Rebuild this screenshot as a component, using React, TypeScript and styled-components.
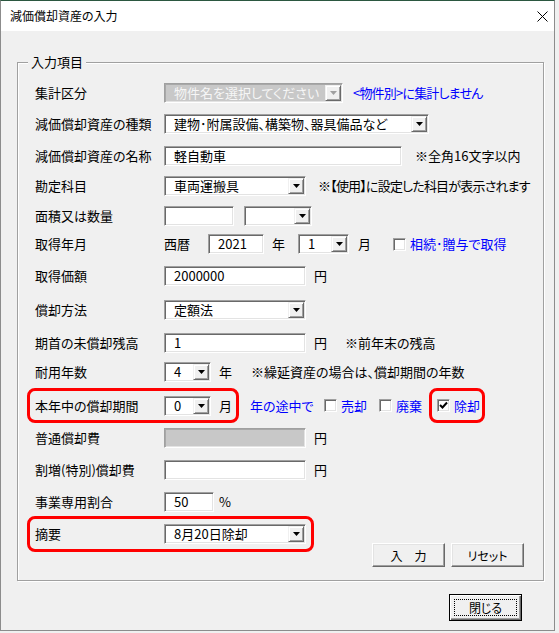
import type { ReactNode } from 'react';
import styled, { createGlobalStyle } from 'styled-components';

const GlobalStyle = createGlobalStyle`
  html, body {
    margin: 0;
    padding: 0;
    background: #f0f0f0;
  }
  body {
    font-family: 'Noto Sans CJK JP', 'Noto Sans', sans-serif;
    font-size: 13px;
    font-feature-settings: 'palt';
    color: #000;
    line-height: 16px;
  }
  * {
    box-sizing: border-box;
  }
`;

const Window = styled.div`
  width: 555px;
  height: 631px;
  border: 1px solid #8c8c8c;
  border-top-color: #2b5740;
  background: #f0f0f0;
  display: flex;
  flex-direction: column;
`;

const TitleBar = styled.div`
  height: 30px;
  flex: none;
  background: #fff;
  display: flex;
  align-items: center;
  justify-content: space-between;
  padding: 0 6px 0 9px;
  font-size: 12px;
`;

const Body = styled.div`
  flex: 1;
  padding: 31px 10px 0 16px;
  display: flex;
  flex-direction: column;
`;

const GroupBox = styled.div`
  position: relative;
  width: 527px;
  height: 519px;
  flex: none;
  border: 1px solid #a0a0a0;
  box-shadow: inset 1px 1px 0 #fff, 1px 1px 0 #fff;
  padding-top: 20px;
`;

const Legend = styled.span`
  position: absolute;
  top: -9px;
  left: 10px;
  padding: 0 3px;
  background: #f0f0f0;
`;

const Row = styled.div<{ $mt?: number; $h?: number; $pl?: number }>`
  display: flex;
  align-items: center;
  height: ${(p) => p.$h ?? 20}px;
  margin-top: ${(p) => p.$mt ?? 0}px;
  padding-left: ${(p) => p.$pl ?? 17}px;
  white-space: nowrap;
`;

const Label = styled.span`
  width: 129px;
  flex: none;
`;

const Text = styled.span<{ $ml?: number; $w?: number; $blue?: boolean; $tight?: boolean }>`
  flex: none;
  margin-left: ${(p) => p.$ml ?? 0}px;
  width: ${(p) => (p.$w ? `${p.$w}px` : 'auto')};
  color: ${(p) => (p.$blue ? '#0000ff' : '#000')};
  letter-spacing: ${(p) => (p.$tight ? '-0.8px' : 'normal')};
`;

const Field = styled.div<{ $w: number; $disabled?: boolean; $h?: number }>`
  width: ${(p) => p.$w}px;
  height: ${(p) => p.$h ?? 20}px;
  flex: none;
  display: flex;
  align-items: center;
  justify-content: space-between;
  padding-left: 9px;
  background: ${(p) => (p.$disabled ? '#c8c8c8' : '#fff')};
  color: ${(p) => (p.$disabled ? '#f6f6f6' : '#000')};
  border: 1px solid;
  border-color: #a0a0a0 #fff #fff #a0a0a0;
  box-shadow: inset 1px 1px 0 ${(p) => (p.$disabled ? '#a8a8a8' : '#696969')},
    inset -1px -1px 0 #e3e3e3;
  overflow: hidden;
`;

const DropButton = styled.span<{ $disabled?: boolean }>`
  width: 16px;
  height: 16px;
  flex: none;
  margin-right: 1px;
  display: flex;
  align-items: center;
  justify-content: center;
  background: #f0f0f0;
  border: 1px solid;
  border-color: #f0f0f0 #696969 #696969 #f0f0f0;
  box-shadow: inset 1px 1px 0 #fff, inset -1px -1px 0 #a0a0a0;
  color: ${(p) => (p.$disabled ? '#a0a0a0' : '#000')};
`;

const Highlight = styled.div<{ $w: number; $h: number; $pl?: number }>`
  width: ${(p) => p.$w}px;
  height: ${(p) => p.$h}px;
  flex: none;
  display: flex;
  align-items: center;
  padding-left: ${(p) => p.$pl ?? 5}px;
  border: 3px solid #ff0000;
  border-radius: 8px;
`;

const CheckLabel = styled.span<{ $w?: number }>`
  display: inline-flex;
  align-items: center;
  flex: none;
  width: ${(p) => (p.$w ? `${p.$w}px` : 'auto')};
  color: #0000ff;
`;

const CheckBox = styled.span`
  width: 13px;
  height: 13px;
  flex: none;
  margin-right: 4px;
  display: flex;
  align-items: center;
  justify-content: center;
  background: #fff;
  border: 1px solid;
  border-color: #a0a0a0 #fff #fff #a0a0a0;
  box-shadow: inset 1px 1px 0 #696969, inset -1px -1px 0 #e3e3e3;
`;

const BottomSection = styled.div`
  display: flex;
  justify-content: space-between;
  height: 51px;
  margin-top: 4px;
  padding: 0 19px 0 9px;
`;

const ButtonRow = styled.div`
  display: flex;
  gap: 6px;
  align-self: flex-end;
`;

const Button = styled.button<{ $default?: boolean }>`
  width: 73px;
  height: ${(p) => (p.$default ? 27 : 24)}px;
  padding: 0;
  font-family: inherit;
  font-size: 12px;
  font-feature-settings: 'palt';
  color: #000;
  background: #f0f0f0;
  border: 1px solid;
  border-color: ${(p) => (p.$default ? '#000' : '#fff #696969 #696969 #fff')};
  box-shadow: ${(p) =>
    p.$default
      ? 'inset 1px 1px 0 #fff, inset -1px -1px 0 #696969, inset -2px -2px 0 #a0a0a0'
      : 'inset -1px -1px 0 #a0a0a0, inset 1px 1px 0 #e3e3e3'};
  display: flex;
  align-items: center;
  justify-content: center;
`;

const FocusRing = styled.span`
  display: flex;
  align-items: center;
  justify-content: center;
  width: 63px;
  height: 17px;
  border: 1px dotted #000;
`;

const Footer = styled.div`
  display: flex;
  justify-content: flex-end;
  margin-top: 13px;
  padding-right: 22px;
`;

const Arrow = () => (
  <svg width="7" height="4" viewBox="0 0 7 4">
    <polygon points="0,0 7,0 3.5,4" fill="currentColor" />
  </svg>
);

const Combo = ({ w, value, disabled }: { w: number; value: string; disabled?: boolean }) => (
  <Field $w={w} $disabled={disabled}>
    <span>{value}</span>
    <DropButton $disabled={disabled}>
      <Arrow />
    </DropButton>
  </Field>
);

const Check = ({ w, checked, children }: { w?: number; checked?: boolean; children: ReactNode }) => (
  <CheckLabel $w={w}>
    <CheckBox>
      {checked && (
        <svg width="9" height="9" viewBox="0 0 9 9">
          <polyline points="1,4 3.5,6.5 8,1.5" fill="none" stroke="#000" strokeWidth="2" />
        </svg>
      )}
    </CheckBox>
    {children}
  </CheckLabel>
);

function App() {
  return (
    <>
      <GlobalStyle />
      <Window>
        <TitleBar>
          <span>減価償却資産の入力</span>
          <svg width="11" height="11" viewBox="0 0 11 11">
            <path d="M0.5 0.5 L10.5 10.5 M10.5 0.5 L0.5 10.5" stroke="#000" strokeWidth="1" />
          </svg>
        </TitleBar>
        <Body>
          <GroupBox>
            <Legend>入力項目</Legend>

            <Row>
              <Label>集計区分</Label>
              <Combo w={179} value="物件名を選択してください" disabled />
              <Text $ml={10} $blue $tight>
                {'<物件別>に集計しません'}
              </Text>
            </Row>

            <Row $mt={11}>
              <Label>減価償却資産の種類</Label>
              <Combo w={265} value="建物･附属設備、構築物、器具備品など" />
            </Row>

            <Row $mt={12}>
              <Label>減価償却資産の名称</Label>
              <Field $w={238}>軽自動車</Field>
              <Text $ml={13}>※全角16文字以内</Text>
            </Row>

            <Row $mt={10}>
              <Label>勘定科目</Label>
              <Combo w={142} value="車両運搬具" />
              <Text $ml={12} $tight>
                ※【使用】に設定した科目が表示されます
              </Text>
            </Row>

            <Row $mt={10}>
              <Label>面積又は数量</Label>
              <Field $w={70} />
              <Text $ml={10} />
              <Combo w={68} value="" />
            </Row>

            <Row $mt={8}>
              <Label>取得年月</Label>
              <Text $w={44}>西暦</Text>
              <Field $w={56}>2021</Field>
              <Text $ml={8} $w={26}>
                年
              </Text>
              <Combo w={51} value="1" />
              <Text $ml={9} $w={35}>
                月
              </Text>
              <Check>相続･贈与で取得</Check>
            </Row>

            <Row $mt={12}>
              <Label>取得価額</Label>
              <Field $w={142}>2000000</Field>
              <Text $ml={8}>円</Text>
            </Row>

            <Row $mt={14}>
              <Label>償却方法</Label>
              <Combo w={142} value="定額法" />
            </Row>

            <Row $mt={13}>
              <Label>期首の未償却残高</Label>
              <Field $w={142}>1</Field>
              <Text $ml={8}>円</Text>
              <Text $ml={18}>※前年末の残高</Text>
            </Row>

            <Row $mt={9}>
              <Label>耐用年数</Label>
              <Combo w={47} value="4" />
              <Text $ml={8}>年</Text>
              <Text $ml={19}>※繰延資産の場合は、償却期間の年数</Text>
            </Row>

            <Row $mt={6} $h={35} $pl={9}>
              <Highlight $w={212} $h={35}>
                <Label>本年中の償却期間</Label>
                <Combo w={47} value="0" />
                <Text $ml={8}>月</Text>
              </Highlight>
              <Text $ml={11} $w={74} $blue>
                年の途中で
              </Text>
              <Check w={55}>売却</Check>
              <Check w={50}>廃棄</Check>
              <Highlight $w={56} $h={35} $pl={5}>
                <Check checked>除却</Check>
              </Highlight>
            </Row>

            <Row $mt={5}>
              <Label>普通償却費</Label>
              <Field $w={142} $disabled />
              <Text $ml={8}>円</Text>
            </Row>

            <Row $mt={12}>
              <Label>割増(特別)償却費</Label>
              <Field $w={142} />
              <Text $ml={8}>円</Text>
            </Row>

            <Row $mt={12}>
              <Label>事業専用割合</Label>
              <Field $w={50}>50</Field>
              <Text $ml={5}>%</Text>
            </Row>

            <BottomSection>
              <Highlight $w={287} $h={36}>
                <Label>摘要</Label>
                <Combo w={142} value="8月20日除却" />
              </Highlight>
              <ButtonRow>
                <Button>入　力</Button>
                <Button>リセット</Button>
              </ButtonRow>
            </BottomSection>
          </GroupBox>

          <Footer>
            <Button $default>
              <FocusRing>閉じる</FocusRing>
            </Button>
          </Footer>
        </Body>
      </Window>
    </>
  );
}

export default App;
